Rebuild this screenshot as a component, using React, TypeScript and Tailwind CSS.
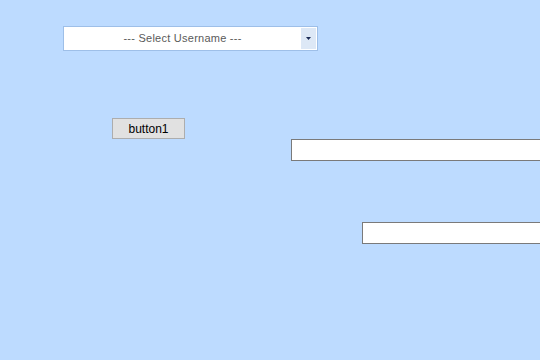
export default function App() {
  return (
    <div className="w-[540px] h-[360px] overflow-hidden bg-[#bddbff] pt-[26px] font-['Liberation_Sans',Arial,sans-serif]">
      {/* username select */}
      <div className="ml-[63px] w-[255px] h-[25px] flex border border-[#9ebfe8] bg-white">
        <div className="flex-1 flex items-center justify-center text-[11px] tracking-[0.25px] text-[#5a5a5a]">
          --- Select Username ---
        </div>
        <div className="w-[15px] my-px mr-px bg-[#dde8f6] flex items-center justify-center">
          <svg width="5" height="3" viewBox="0 0 5 3">
            <path d="M0 0h5L2.5 3z" fill="#1b2a55" />
          </svg>
        </div>
      </div>

      <button className="block ml-[112px] mt-[67px] w-[73px] h-[21px] bg-[#e1e1e1] border border-[#adadad] text-[12px] text-black">
        button1
      </button>

      <input className="block ml-[291px] w-[260px] h-[22px] bg-white border border-[#7a7a7a] outline-none" />

      <input className="block ml-[362px] mt-[61px] w-[200px] h-[22px] bg-white border border-[#7a7a7a] outline-none" />
    </div>
  );
}
